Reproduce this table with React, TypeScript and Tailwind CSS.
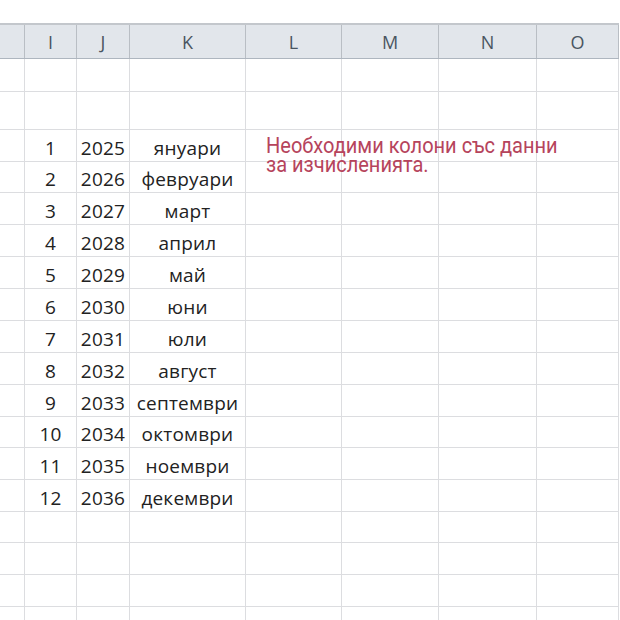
import React from "react";

const cols = ["", "I", "J", "K", "L", "M", "N", "O"];
const widths = ["w-[25px]", "w-[52px]", "w-[53px]", "w-[116px]", "w-[96px]", "w-[97px]", "w-[98px]", "flex-1"];

const months = ["януари", "февруари", "март", "април", "май", "юни", "юли", "август", "септември", "октомври", "ноември", "декември"];

type Row = { h: string; cells: string[]; note?: boolean };

const heights = [32, 31, 32, 32, 32, 32, 32, 32, 32, 31, 32, 32, 31, 32, 32, 32];

export default function App() {
  const rows: Row[] = [];
  rows.push({ h: "h-[33px]", cells: [] });
  rows.push({ h: "h-[38px]", cells: [] });
  heights.forEach((hh, i) => {
    const h = hh === 32 ? "h-[32px]" : "h-[31px]";
    if (i < 12) {
      rows.push({ h, cells: ["", String(i + 1), String(2025 + i), months[i]], note: i === 0 });
    } else {
      rows.push({ h, cells: [] });
    }
  });

  return (
    <div className="w-[620px] h-[620px] overflow-hidden bg-white relative" style={{ fontFamily: '"Open Sans", sans-serif' }}>
      <div className="h-[23px] bg-white" />
      <div className="w-[619px]">
        <div className="h-[2px] bg-[#c3c7cc]" />
        <div className="flex h-[34px] bg-[#e2e6eb] border-b border-[#aeb6bf]">
          {cols.map((c, i) => (
            <div
              key={i}
              className={`${widths[i]} h-full border-r border-[#b9bec4] flex items-center justify-center text-[18px] text-[#4a5561] leading-none`}
            >
              {c}
            </div>
          ))}
        </div>
        {rows.map((r, ri) => (
          <div key={ri} className={`flex ${r.h} border-b border-[#dcdde0]`}>
            {cols.map((_, ci) => (
              <div
                key={ci}
                className={`${widths[ci]} h-full border-r border-[#dcdde0] relative flex items-end justify-center pb-[1px] text-[19px] font-medium tracking-[0.2px] leading-[24px] text-[#222222] whitespace-nowrap`}
              >
                {r.cells[ci] ?? ""}
                {r.note && ci === 4 ? (
                  <div
                    className="absolute left-[20px] top-[6px] z-10 whitespace-nowrap text-[22px] font-normal tracking-normal leading-[19px] text-[#b6445c] origin-left scale-x-[0.91]"
                    style={{ fontFamily: "Roboto, sans-serif" }}
                  >
                    Необходими колони със данни
                    <br />
                    за изчисленията.
                  </div>
                ) : null}
              </div>
            ))}
          </div>
        ))}
      </div>
    </div>
  );
}
